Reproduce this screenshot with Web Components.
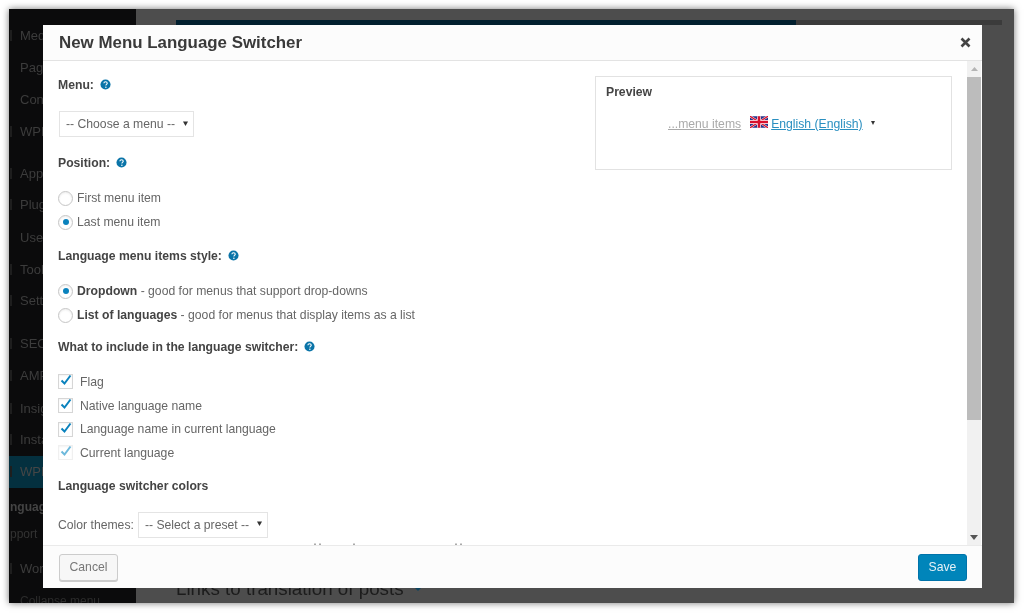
<!DOCTYPE html>
<html>
<head>
<meta charset="utf-8">
<style>
html, body { margin: 0; height: 100%; background: #fff; overflow: hidden; }
body { font-family: "Liberation Sans", Arial, sans-serif; }
.mt12 { margin-top: 12px; }
.mt13 { margin-top: 13px; }
.mt14 { margin-top: 14px; }
.mt15 { margin-top: 15px; }
.mt18 { margin-top: 18px; }
.first { margin-left: 1px; }
</style>
</head>
<body>

<wp-screen>
	<wp-sidebar slot="side"></wp-sidebar>
	<wp-modal title="New Menu Language Switcher">
		<help-label slot="left" text="Menu:"></help-label>
		<ui-select slot="left" class="mt18 first" label="-- Choose a menu --"></ui-select>
		<help-label slot="left" class="mt18" text="Position:"></help-label>
		<ui-radio slot="left" class="mt15">First menu item</ui-radio>
		<ui-radio slot="left" checked>Last menu item</ui-radio>
		<help-label slot="left" class="mt14" text="Language menu items style:"></help-label>
		<ui-radio slot="left" class="mt15" checked><b>Dropdown</b> - good for menus that support drop-downs</ui-radio>
		<ui-radio slot="left"><b>List of languages</b> - good for menus that display items as a list</ui-radio>
		<help-label slot="left" class="mt12" text="What to include in the language switcher:"></help-label>
		<ui-check slot="left" class="mt15" checked>Flag</ui-check>
		<ui-check slot="left" checked>Native language name</ui-check>
		<ui-check slot="left" checked>Language name in current language</ui-check>
		<ui-check slot="left" checked disabled>Current language</ui-check>
		<help-label slot="left" class="mt13" text="Language switcher colors" nohelp></help-label>
		<color-row slot="left" class="mt18"></color-row>
		<menu-preview slot="right"></menu-preview>
	</wp-modal>
</wp-screen>

<script>
class WpScreen extends HTMLElement {
	constructor() {
		super();
		this.attachShadow({ mode: "open" });
		this.shadowRoot.innerHTML = `
		<style>
			:host { display: block; position: relative; width: 1005px; height: 594px; margin: 9px 0 0 9px;
				box-shadow: 0 0 7px rgba(0,0,0,.55); filter: blur(.6px); }
			.wrap { display: flex; height: 100%; overflow: hidden; background: #4d4d4d; }
			.main { flex: 1; padding: 11px 12px 3px 40px; display: flex; flex-direction: column; min-width: 0; }
			.top { height: 5px; background: #3b3b3b; }
			.top div { width: 620px; height: 5px; background: #02202f; }
			.title { margin-top: auto; display: flex; align-items: center; gap: 10px; height: 22px; font-size: 18.8px; line-height: 22px; color: #1c1c1c; white-space: nowrap; }
			.title svg { width: 8px; height: 4px; }
			.modal { position: absolute; left: 34px; top: 16px; width: 939px; height: 563px; }
		</style>
		<div class="wrap">
			<slot name="side"></slot>
			<div class="main">
				<div class="top"><div></div></div>
				<div class="title"><span>Links to translation of posts</span><svg viewBox="0 0 8 4"><path d="M0 0h8L4 4z" fill="#0d4560"/></svg></div>
			</div>
		</div>
		<div class="modal"><slot></slot></div>`;
	}
}
customElements.define("wp-screen", WpScreen);

class WpSidebar extends HTMLElement {
	constructor() {
		super();
		this.attachShadow({ mode: "open" });
		const items = [
			["Med", 36, "ic"], ["Pag", 68], ["Con", 100], ["WPF", 132, "ic"],
			["App", 174, "ic"], ["Plug", 205, "ic"], ["Use", 238], ["Tool", 270, "ic"], ["Sett", 301, "ic"],
			["SEO", 344, "ic"], ["AMP", 376, "ic"], ["Insig", 409, "ic"], ["Insta", 440, "ic"], ["WPM", 472, "on ic"],
			["nguag", 507, "sub"], ["pport", 534, "sub dim"], ["Wor", 569, "ic"], ["Collapse menu", 601, "small"]
		];
		let html = "", prev = 9;
		for (const [name, y, kind] of items) {
			html += `<div class="item ${kind || ""}" style="margin-top:${y - 16 - prev}px"><span>${name}</span></div>`;
			prev = y + 16;
		}
		this.shadowRoot.innerHTML = `
		<style>
			:host { display: block; width: 127px; flex: none; background: #0b0b0c; overflow: hidden; }
			.item { position: relative; height: 32px; line-height: 32px; padding-left: 11px; font-size: 13px; color: #3c3c3c; white-space: nowrap; }
			.ic::before { content: ""; position: absolute; left: 1px; top: 10px; width: 2px; height: 11px; background: #1e1e1e; }
			.on { background: #04303f; color: #464646; }
			.sub { padding-left: 1px; font-size: 12px; font-weight: bold; color: #444; }
			.dim { font-weight: normal; color: #333; }
			.small { font-size: 12px; color: #2c2c2c; }
		</style>${html}`;
	}
}
customElements.define("wp-sidebar", WpSidebar);

class WpModal extends HTMLElement {
	constructor() {
		super();
		this.attachShadow({ mode: "open" });
		this.shadowRoot.innerHTML = `
		<style>
			:host { display: flex; flex-direction: column; height: 100%; background: #fff; color: #444; }
			header { height: 35px; flex: none; display: flex; align-items: center; justify-content: space-between;
				padding: 0 11px 0 16px; background: #fcfcfc; border-bottom: 1px solid #e3e3e3; }
			h1 { margin: 0; font-size: 16.9px; font-weight: bold; color: #3a3a3a; }
			.x { width: 11px; height: 11px; }
			.body { flex: 1; min-height: 0; display: flex; position: relative; overflow: hidden; }
			.content { flex: 1; display: flex; justify-content: space-between; padding: 16px 15px 0 15px; min-width: 0; }
			.left { display: flex; flex-direction: column; }
			.right { width: 357px; margin-top: -1px; }
			.peek { position: absolute; left: 0; bottom: 0; width: 500px; height: 2px; }
			.bar { width: 14px; flex: none; margin-right: 1px; background: #f1f1f1; display: flex; flex-direction: column; align-items: center; }
			.arrow { height: 16px; flex: none; display: flex; align-items: center; justify-content: center; }
			.thumb { width: 100%; height: 343px; background: #bcbcbc; }
			.down { margin-top: auto; }
			footer { height: 43px; flex: none; box-sizing: border-box; display: flex; align-items: center; justify-content: space-between;
				padding: 0 15px 0 16px; background: #fcfcfc; border-top: 1px solid #eaeaea; }
			.btn { box-sizing: border-box; height: 27px; border-radius: 3px; font-size: 12.200px; display: flex; align-items: center; justify-content: center; }
			.cancel { width: 59px; background: #f7f7f7; border: 1px solid #ccc; color: #777; box-shadow: 0 1px 0 #ccc; }
			.save { width: 49px; background: #0085ba; border: 1px solid #0073aa; color: #e4f1f7; }
		</style>
		<header>
			<h1>${this.getAttribute("title")}</h1>
			<svg class="x" viewBox="0 0 11 11"><path d="M1.500 1.500l8 8M9.500 1.500l-8 8" stroke="#444" stroke-width="2.600" fill="none"/></svg>
		</header>
		<div class="body">
			<div class="content">
				<div class="left"><slot name="left"></slot></div>
				<div class="right"><slot name="right"></slot></div>
			</div>
			<svg class="peek" viewBox="0 0 500 2"><path d="M271 .5h2v1.500h-2zM276 .5h2v1.500h-2zM310 .5h2v1.500h-2zM412 .5h2v1.500h-2zM417 .5h2v1.500h-2z" fill="#aaa"/></svg>
			<div class="bar">
				<div class="arrow"><svg width="7" height="4" viewBox="0 0 7 4"><path d="M3.500 0L7 4H0z" fill="#b4b4b4"/></svg></div>
				<div class="thumb"></div>
				<div class="arrow down"><svg width="8" height="5" viewBox="0 0 8 5"><path d="M4 5L8 0H0z" fill="#555"/></svg></div>
			</div>
		</div>
		<footer>
			<div class="btn cancel">Cancel</div>
			<div class="btn save">Save</div>
		</footer>`;
	}
}
customElements.define("wp-modal", WpModal);

class HelpLabel extends HTMLElement {
	constructor() {
		super();
		this.attachShadow({ mode: "open" });
		const help = this.hasAttribute("nohelp") ? "" : `<svg viewBox="0 0 12 12"><circle cx="6" cy="6" r="5.500" fill="#0a74a8"/><path d="M4.200 4.700C4.300 3.600 5 3 6 3c1.100 0 1.900.6 1.900 1.600 0 1.300-1.500 1.300-1.500 2.500" stroke="#fff" stroke-width="1.200" fill="none"/><circle cx="6.400" cy="9" r=".8" fill="#fff"/></svg>`;
		this.shadowRoot.innerHTML = `
		<style>
			:host { display: flex; align-items: center; height: 16px; font-size: 12.200px; font-weight: bold; color: #444; white-space: nowrap; }
			svg { width: 11px; height: 11px; margin: -2px 0 0 6px; }
		</style>
		<span>${this.getAttribute("text")}</span>${help}`;
	}
}
customElements.define("help-label", HelpLabel);

class UiSelect extends HTMLElement {
	constructor() {
		super();
		this.attachShadow({ mode: "open" });
		this.shadowRoot.innerHTML = `
		<style>
			:host { display: inline-flex; align-self: flex-start; box-sizing: border-box; align-items: center; height: 26px; padding: 0 5px 0 6px; gap: 8px;
				border: 1px solid #e4e4e4; background: #fff; font-size: 12.200px; color: #666; white-space: nowrap; }
			svg { width: 5px; height: 5px; margin-top: -2px; }
		</style>
		<span>${this.getAttribute("label")}</span>
		<svg viewBox="0 0 5 5"><path d="M0 .5h5L2.500 5z" fill="#333"/></svg>`;
	}
}
customElements.define("ui-select", UiSelect);

class UiRadio extends HTMLElement {
	constructor() {
		super();
		this.attachShadow({ mode: "open" });
		const dot = this.hasAttribute("checked") ? "<i></i>" : "";
		this.shadowRoot.innerHTML = `
		<style>
			:host { display: flex; align-items: center; gap: 4px; height: 24px; font-size: 12.200px; color: #666; white-space: nowrap; }
			.r { box-sizing: border-box; width: 15px; height: 15px; border: 1px solid #c6c6c6; border-radius: 50%; display: flex;
				align-items: center; justify-content: center; box-shadow: inset 0 1px 2px rgba(0,0,0,.08); }
			i { width: 6px; height: 6px; border-radius: 50%; background: #0a82bd; }
			::slotted(b) { color: #444; }
		</style>
		<span class="r">${dot}</span><span><slot></slot></span>`;
	}
}
customElements.define("ui-radio", UiRadio);

class UiCheck extends HTMLElement {
	constructor() {
		super();
		this.attachShadow({ mode: "open" });
		const off = this.hasAttribute("disabled");
		this.shadowRoot.innerHTML = `
		<style>
			:host { display: flex; align-items: center; gap: 7px; height: 23.700px; font-size: 12.200px; color: #666; white-space: nowrap; }
			.c { position: relative; box-sizing: border-box; width: 15px; height: 15px; border: 1px solid ${off ? "#f0f0f0" : "#d6d6d6"};
				box-shadow: inset 0 1px 2px rgba(0,0,0,.05); }
			svg { position: absolute; left: 1px; top: -1px; width: 12px; height: 12px; }
		</style>
		<span class="c"><svg viewBox="0 0 12 12"><path d="M1.500 6.500l3 3L10.500 1.500" stroke="${off ? "#6db9dc" : "#0a82bd"}" stroke-width="2" fill="none"/></svg></span><span><slot></slot></span>`;
	}
}
customElements.define("ui-check", UiCheck);

class ColorRow extends HTMLElement {
	constructor() {
		super();
		this.attachShadow({ mode: "open" });
		this.shadowRoot.innerHTML = `
		<style>
			:host { display: flex; align-items: center; gap: 4px; font-size: 12.200px; color: #666; white-space: nowrap; }
		</style>
		<span>Color themes:</span><ui-select label="-- Select a preset --"></ui-select>`;
	}
}
customElements.define("color-row", ColorRow);

class MenuPreview extends HTMLElement {
	constructor() {
		super();
		this.attachShadow({ mode: "open" });
		this.shadowRoot.innerHTML = `
		<style>
			:host { display: block; box-sizing: border-box; height: 94px; border: 1px solid #e2e2e2; padding: 8px 10px; font-size: 12.200px; }
			h2 { margin: 0; font-size: 12.200px; font-weight: bold; color: #444; line-height: 14px; }
			.row { display: flex; align-items: center; margin: 18px 0 0 62px; white-space: nowrap; }
			.more { color: #aaa; text-decoration: underline; }
			.flag { width: 18px; height: 12px; margin: -4px 3px 0 9px; }
			.lang { color: #2a8fc0; text-decoration: underline; }
			.caret { width: 4px; height: 4px; margin: -2px 0 0 8px; }
		</style>
		<h2>Preview</h2>
		<div class="row">
			<span class="more">...menu items</span>
			<svg class="flag" viewBox="0 0 17 11">
				<rect width="17" height="11" rx="1.500" fill="#27348b"/>
				<path d="M0 0l17 11M17 0L0 11" stroke="#fff" stroke-width="2"/>
				<path d="M0 0l17 11M17 0L0 11" stroke="#d8102c" stroke-width="1.200"/>
				<path d="M8.500 0v11M0 5.500h17" stroke="#fff" stroke-width="3.600"/>
				<path d="M8.500 0v11M0 5.500h17" stroke="#d8102c" stroke-width="2.400"/>
			</svg>
			<span class="lang">English (English)</span>
			<svg class="caret" viewBox="0 0 4 4"><path d="M0 0h4L2 4z" fill="#333"/></svg>
		</div>`;
	}
}
customElements.define("menu-preview", MenuPreview);
</script>
</body>
</html>
